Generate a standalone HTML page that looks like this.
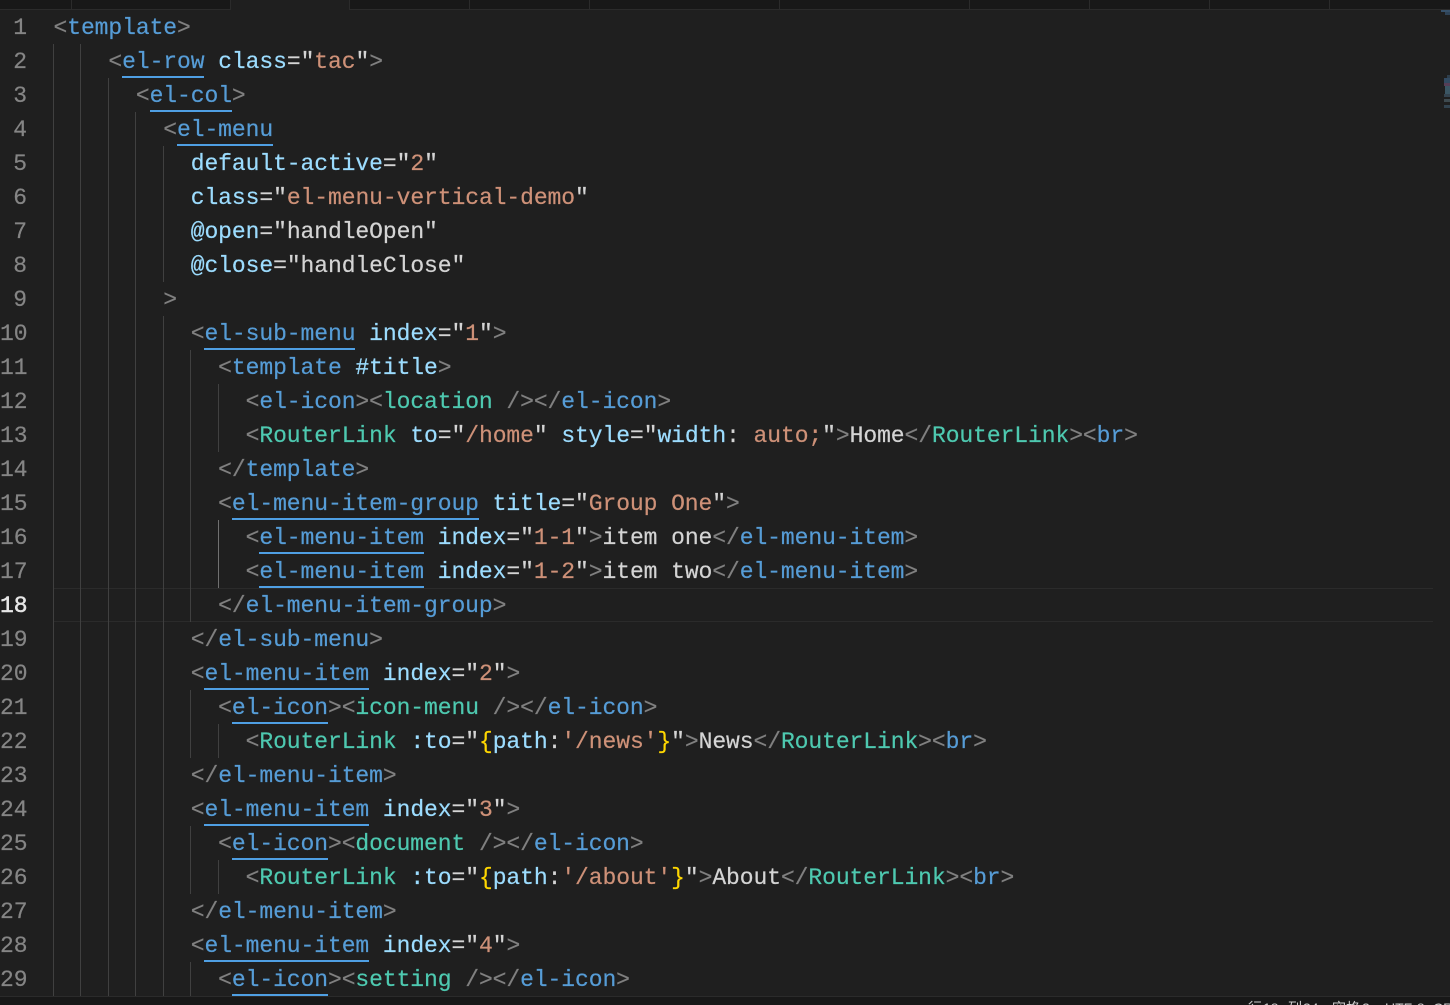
<!DOCTYPE html>
<html lang="en">
<head>
<meta charset="utf-8">
<title>Editor</title>
<style>
html,body{margin:0;padding:0;width:1450px;height:1005px;overflow:hidden;background:#1f1f1f}
#app{position:relative;width:1450px;height:1005px;overflow:hidden;background:#1f1f1f}
pre{margin:0;position:absolute;font-family:"Liberation Mono","DejaVu Sans Mono",monospace;font-size:23px;line-height:34px;letter-spacing:-0.08px;white-space:pre;-webkit-text-stroke:.2px}
#nums{left:0;top:11px;width:27px;text-align:right;color:#858585}
#nums b{font-weight:normal;color:#e6e6e6;-webkit-text-stroke:.5px #e6e6e6}
#code{left:53.5px;top:11px;color:#d4d4d4;height:985px;overflow:hidden;width:1380px}
.g{color:#808080}.t{color:#569cd6}.a{color:#9cdcfe}.s{color:#ce9178}.c{color:#4ec9b0}.w{color:#d4d4d4}.y{color:#ffd700}
i{font-style:normal;color:#d4d4d4}
.u{position:relative;color:#569cd6}
.u::after{content:"";position:absolute;left:0;right:0;bottom:-3px;height:2px;background:#4f9fe3}
.v{position:absolute;width:1px;background:#404040}
.vb{position:absolute;width:1px;background:#707070}
.h{position:absolute;left:54px;width:1379px;height:1px;background:#2b2b2b}
#tabs{position:absolute;left:0;top:0;width:1450px;height:9px;background:#181818}
#tabline{position:absolute;left:0;top:9px;width:1450px;height:1px;background:#2b2b2b}
#act{position:absolute;left:231px;top:0;width:118px;height:10px;background:#1f1f1f}
.sep{position:absolute;top:0;width:1px;height:10px;background:#2b2b2b}
#status{position:absolute;left:0;top:996px;width:1450px;height:9px;background:#181818;border-top:1px solid #2b2b2b;box-sizing:border-box;overflow:hidden}
#status span{position:absolute;top:2px;font-family:"Liberation Sans","Noto Sans CJK SC",sans-serif;font-size:14px;line-height:18px;color:#cccccc;white-space:pre}
.m{position:absolute;opacity:.75}
</style>
</head>
<body>
<div id="app">
<div id="tabs"></div>
<div id="tabline"></div>
<div id="act"></div>
<div class="sep" style="left:71px"></div>
<div class="sep" style="left:230px"></div>
<div class="sep" style="left:349px"></div>
<div class="sep" style="left:469px"></div>
<div class="sep" style="left:589px"></div>
<div class="sep" style="left:779px"></div>
<div class="sep" style="left:969px"></div>
<div class="sep" style="left:1089px"></div>
<div class="sep" style="left:1209px"></div>
<div class="sep" style="left:1329px"></div>

<div class="h" style="top:588px"></div>
<div class="h" style="top:621px"></div>

<div class="v" style="left:53px;top:44px;height:952px"></div>
<div class="v" style="left:80px;top:44px;height:952px"></div>
<div class="v" style="left:108px;top:78px;height:918px"></div>
<div class="v" style="left:135px;top:112px;height:884px"></div>
<div class="v" style="left:163px;top:146px;height:136px"></div>
<div class="v" style="left:163px;top:316px;height:680px"></div>
<div class="v" style="left:190px;top:350px;height:272px"></div>
<div class="v" style="left:190px;top:690px;height:68px"></div>
<div class="v" style="left:190px;top:826px;height:68px"></div>
<div class="v" style="left:190px;top:962px;height:34px"></div>
<div class="v" style="left:218px;top:384px;height:68px"></div>
<div class="vb" style="left:218px;top:520px;height:68px"></div>
<div class="v" style="left:218px;top:724px;height:34px"></div>
<div class="v" style="left:218px;top:860px;height:34px"></div>

<pre id="nums">1
2
3
4
5
6
7
8
9
10
11
12
13
14
15
16
17
<b>18</b>
19
20
21
22
23
24
25
26
27
28
29</pre>

<pre id="code"><span class="g">&lt;</span><span class="t">template</span><span class="g">&gt;</span>
    <span class="g">&lt;</span><span class="u">el-row</span> <span class="a">class</span><span class="w">=</span><span class="s"><i>"</i>tac<i>"</i></span><span class="g">&gt;</span>
      <span class="g">&lt;</span><span class="u">el-col</span><span class="g">&gt;</span>
        <span class="g">&lt;</span><span class="u">el-menu</span>
          <span class="a">default-active</span><span class="w">=</span><span class="s"><i>"</i>2<i>"</i></span>
          <span class="a">class</span><span class="w">=</span><span class="s"><i>"</i>el-menu-vertical-demo<i>"</i></span>
          <span class="a">@open</span><span class="w">=</span><span class="w">"handleOpen"</span>
          <span class="a">@close</span><span class="w">=</span><span class="w">"handleClose"</span>
        <span class="g">&gt;</span>
          <span class="g">&lt;</span><span class="u">el-sub-menu</span> <span class="a">index</span><span class="w">=</span><span class="s"><i>"</i>1<i>"</i></span><span class="g">&gt;</span>
            <span class="g">&lt;</span><span class="t">template</span> <span class="a">#title</span><span class="g">&gt;</span>
              <span class="g">&lt;</span><span class="t">el-icon</span><span class="g">&gt;&lt;</span><span class="c">location</span> <span class="g">/&gt;&lt;/</span><span class="t">el-icon</span><span class="g">&gt;</span>
              <span class="g">&lt;</span><span class="c">RouterLink</span> <span class="a">to</span><span class="w">=</span><span class="s"><i>"</i>/home<i>"</i></span> <span class="a">style</span><span class="w">=</span><i>"</i><span class="a">width</span><span class="w">:</span> <span class="s">auto;</span><i>"</i><span class="g">&gt;</span><span class="w">Home</span><span class="g">&lt;/</span><span class="c">RouterLink</span><span class="g">&gt;&lt;</span><span class="t">br</span><span class="g">&gt;</span>
            <span class="g">&lt;/</span><span class="t">template</span><span class="g">&gt;</span>
            <span class="g">&lt;</span><span class="u">el-menu-item-group</span> <span class="a">title</span><span class="w">=</span><span class="s"><i>"</i>Group One<i>"</i></span><span class="g">&gt;</span>
              <span class="g">&lt;</span><span class="u">el-menu-item</span> <span class="a">index</span><span class="w">=</span><span class="s"><i>"</i>1-1<i>"</i></span><span class="g">&gt;</span><span class="w">item one</span><span class="g">&lt;/</span><span class="t">el-menu-item</span><span class="g">&gt;</span>
              <span class="g">&lt;</span><span class="u">el-menu-item</span> <span class="a">index</span><span class="w">=</span><span class="s"><i>"</i>1-2<i>"</i></span><span class="g">&gt;</span><span class="w">item two</span><span class="g">&lt;/</span><span class="t">el-menu-item</span><span class="g">&gt;</span>
            <span class="g">&lt;/</span><span class="t">el-menu-item-group</span><span class="g">&gt;</span>
          <span class="g">&lt;/</span><span class="t">el-sub-menu</span><span class="g">&gt;</span>
          <span class="g">&lt;</span><span class="u">el-menu-item</span> <span class="a">index</span><span class="w">=</span><span class="s"><i>"</i>2<i>"</i></span><span class="g">&gt;</span>
            <span class="g">&lt;</span><span class="u">el-icon</span><span class="g">&gt;&lt;</span><span class="c">icon-menu</span> <span class="g">/&gt;&lt;/</span><span class="t">el-icon</span><span class="g">&gt;</span>
              <span class="g">&lt;</span><span class="c">RouterLink</span> <span class="a">:to</span><span class="w">=</span><span class="w">"</span><span class="y">{</span><span class="a">path</span><span class="w">:</span><span class="s">'/news'</span><span class="y">}</span><span class="w">"</span><span class="g">&gt;</span><span class="w">News</span><span class="g">&lt;/</span><span class="c">RouterLink</span><span class="g">&gt;&lt;</span><span class="t">br</span><span class="g">&gt;</span>
          <span class="g">&lt;/</span><span class="t">el-menu-item</span><span class="g">&gt;</span>
          <span class="g">&lt;</span><span class="u">el-menu-item</span> <span class="a">index</span><span class="w">=</span><span class="s"><i>"</i>3<i>"</i></span><span class="g">&gt;</span>
            <span class="g">&lt;</span><span class="u">el-icon</span><span class="g">&gt;&lt;</span><span class="c">document</span> <span class="g">/&gt;&lt;/</span><span class="t">el-icon</span><span class="g">&gt;</span>
              <span class="g">&lt;</span><span class="c">RouterLink</span> <span class="a">:to</span><span class="w">=</span><span class="w">"</span><span class="y">{</span><span class="a">path</span><span class="w">:</span><span class="s">'/about'</span><span class="y">}</span><span class="w">"</span><span class="g">&gt;</span><span class="w">About</span><span class="g">&lt;/</span><span class="c">RouterLink</span><span class="g">&gt;&lt;</span><span class="t">br</span><span class="g">&gt;</span>
          <span class="g">&lt;/</span><span class="t">el-menu-item</span><span class="g">&gt;</span>
          <span class="g">&lt;</span><span class="u">el-menu-item</span> <span class="a">index</span><span class="w">=</span><span class="s"><i>"</i>4<i>"</i></span><span class="g">&gt;</span>
            <span class="g">&lt;</span><span class="u">el-icon</span><span class="g">&gt;&lt;</span><span class="c">setting</span> <span class="g">/&gt;&lt;/</span><span class="t">el-icon</span><span class="g">&gt;</span></pre>

<div class="m" style="left:1441px;top:10px;width:9px;height:2px;background:#3f6283"></div>
<div class="m" style="left:1445px;top:12px;width:5px;height:3px;background:#35506b"></div>
<div class="m" style="left:1447px;top:75px;width:3px;height:3px;background:#34495c"></div>
<div class="m" style="left:1444px;top:78px;width:6px;height:5px;background:#3a5a78"></div>
<div class="m" style="left:1444px;top:83px;width:6px;height:3px;background:#6a4a6a"></div>
<div class="m" style="left:1445px;top:86px;width:5px;height:8px;background:#456a7c"></div>
<div class="m" style="left:1444px;top:94px;width:6px;height:3px;background:#3c5060"></div>
<div class="m" style="left:1444px;top:99px;width:6px;height:3px;background:#4a5a60"></div>
<div class="m" style="left:1444px;top:105px;width:6px;height:3px;background:#3a5060"></div>

<div id="status">
<span style="left:1248px">行</span>
<span style="left:1263px">18</span>
<span style="left:1288px">列</span>
<span style="left:1303px">34</span>
<span style="left:1332px">空格:</span>
<span style="left:1362px">2</span>
<span style="left:1385px">UTF-8</span>
<span style="left:1433px">CRLF</span>
</div>
</div>
</body>
</html>
